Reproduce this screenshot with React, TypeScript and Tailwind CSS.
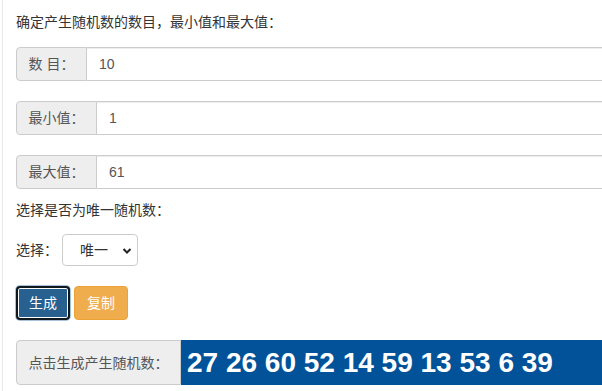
import React from 'react';

const font = { fontFamily: '"Helvetica Neue", "Liberation Sans", "Noto Sans CJK SC", sans-serif' };

const Field = ({ label, value, w }: { label: string; value: string; w: string }) => (
  <div className="flex h-[34px] w-[640px] text-[14px]">
    <span
      className={`${w} flex items-center justify-center bg-[#eeeeee] border border-[#cccccc] rounded-l-[4px] text-[#555555]`}
    >
      {label}
    </span>
    <input
      readOnly
      value={value}
      className="flex-1 border border-l-0 border-[#cccccc] pl-[12px] text-[#555555] outline-none shadow-[inset_0_1px_1px_rgba(0,0,0,0.075)]"
    />
  </div>
);

export default function App() {
  return (
    <div className="w-screen h-screen overflow-hidden bg-white" style={font}>
      <div className="ml-[2px] h-full border-l border-[#e8e8e8] pl-[13px] text-[14px] leading-[20px] text-[#333333]">
        <p className="pt-[12px]">确定产生随机数的数目，最小值和最大值：</p>
        <div className="mt-[15px] flex flex-col gap-[20px]">
          <Field label="数 目：" value="10" w="w-[71px]" />
          <Field label="最小值：" value="1" w="w-[81px]" />
          <Field label="最大值：" value="61" w="w-[81px]" />
        </div>
        <p className="mt-[11px]">选择是否为唯一随机数：</p>
        <div className="mt-[14px] flex items-center h-[32px]">
          <span>选择：</span>
          <div className="relative ml-[4px] h-[32px] w-[76px] border border-[#cccccc] rounded-[4px] flex items-center">
            <span className="pl-[17px] text-[#333333]">唯一</span>
            <svg className="absolute right-[5px] top-[12px]" width="10" height="8" viewBox="0 0 10 8">
              <path d="M1.5 2 L5 5.5 L8.5 2" stroke="#222" strokeWidth="2" fill="none" />
            </svg>
          </div>
        </div>
        <div className="mt-[20px] flex gap-[4px]">
          <button className="h-[34px] w-[54px] rounded-[4px] bg-[#286090] text-white border-2 border-[#101820] shadow-[inset_0_0_0_1px_#ffffff,0_0_0_1px_#a9c2da]">
            生成
          </button>
          <button className="h-[34px] w-[54px] rounded-[4px] bg-[#f0ad4e] text-white border border-[#eea236]">
            复制
          </button>
        </div>
        <div className="mt-[20px] flex h-[45px] w-[640px]">
          <span className="w-[165px] flex items-center justify-center bg-[#eeeeee] border border-[#cccccc] rounded-l-[4px] text-[#555555]">
            点击生成产生随机数：
          </span>
          <div
            className="flex-1 bg-[#02529a] text-white font-bold text-[28px] flex items-center pl-[6px]"
            style={{ fontFamily: '"Liberation Sans", Arial, sans-serif' }}
          >
            27 26 60 52 14 59 13 53 6 39
          </div>
        </div>
      </div>
    </div>
  );
}
